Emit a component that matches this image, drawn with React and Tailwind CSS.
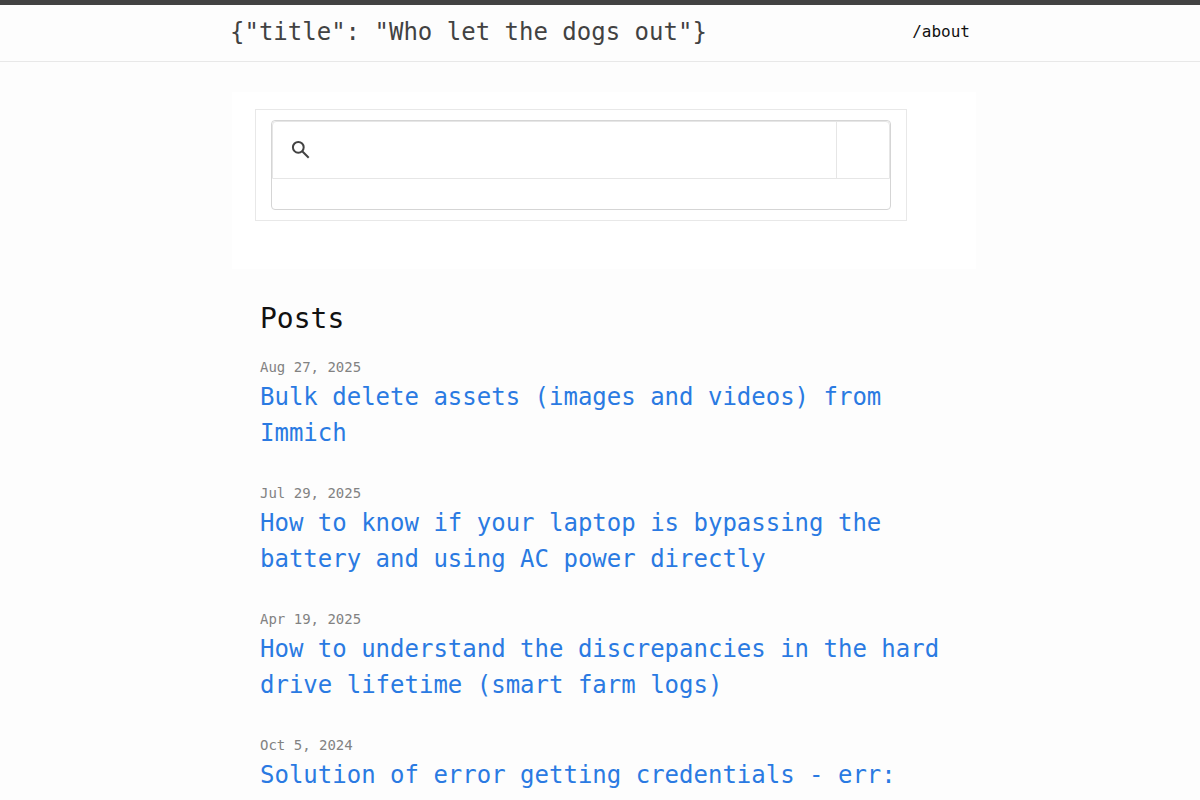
const posts = [
  {
    date: "Aug 27, 2025",
    title: "Bulk delete assets (images and videos) from Immich",
  },
  {
    date: "Jul 29, 2025",
    title:
      "How to know if your laptop is bypassing the battery and using AC power directly",
  },
  {
    date: "Apr 19, 2025",
    title:
      "How to understand the discrepancies in the hard drive lifetime (smart farm logs)",
  },
  {
    date: "Oct 5, 2024",
    title: "Solution of error getting credentials - err:",
  },
];

function Header() {
  return (
    <header className="border-t-5 border-b border-t-[#424242] border-b-[#e8e8e8]">
      <div className="mx-auto flex h-14 max-w-[800px] items-center justify-between px-[30px] pb-0.5">
        <a href="#" className="text-2xl text-[#424242]">
          {'{"title": "Who let the dogs out"}'}
        </a>
        <nav>
          <a href="#about" className="text-base text-[#111111]">
            /about
          </a>
        </nav>
      </div>
    </header>
  );
}

function SearchIcon() {
  return (
    <svg
      viewBox="0 0 24 24"
      className="size-6 fill-none stroke-[#424242]"
      strokeWidth="2"
    >
      <circle cx="9.3" cy="9.3" r="5.4" />
      <path d="M13 13l6.7 6.7" />
    </svg>
  );
}

function SearchBox() {
  return (
    <div className="-mr-1.5 ml-0.5 bg-white pt-[17px] pr-[69px] pb-12 pl-[23px]">
      <div className="border border-[#e8e8e8] px-[15px] py-2.5">
        <form
          className="rounded border border-[#d5d5d5] pb-[30px]"
          onSubmit={(e) => e.preventDefault()}
        >
          <div className="flex h-[58px] rounded-t border border-[#e6e6e6]">
            <button type="submit" aria-label="Search" className="pr-3 pl-4">
              <SearchIcon />
            </button>
            <input
              type="text"
              aria-label="Search posts"
              className="min-w-0 flex-1 text-base outline-none"
            />
            <button
              type="reset"
              aria-label="Clear"
              className="w-[53px] border-l border-[#e6e6e6]"
            />
          </div>
        </form>
      </div>
    </div>
  );
}

function App() {
  return (
    <div className="min-h-screen bg-[#fdfdfd] font-['DejaVu_Sans_Mono',monospace] text-[#111111]">
      <Header />
      <main className="mx-auto max-w-[800px] px-[30px] py-[30px]">
        <SearchBox />
        <div className="mt-[29px] pl-[30px]">
          <h2 className="mb-[15px] text-[28px] leading-[42px]">Posts</h2>
          <ul>
            {posts.map((post) => (
              <li key={post.title} className="mb-[30px]">
                <span className="block text-sm leading-6 text-[#828282]">
                  {post.date}
                </span>
                <h3 className="text-2xl leading-9">
                  <a href="#" className="text-[#2a7ae2]">
                    {post.title}
                  </a>
                </h3>
              </li>
            ))}
          </ul>
        </div>
      </main>
    </div>
  );
}

export default App;
